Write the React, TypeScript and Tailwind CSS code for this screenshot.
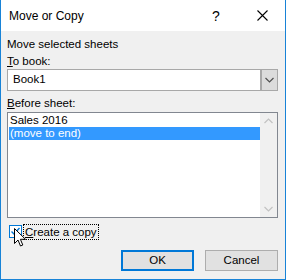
import React from "react";

function Chevron({ color, up }: { color: string; up?: boolean }) {
  return (
    <svg width="9" height="6" viewBox="0 0 9 6">
      <path d={up ? "M0.5 5 L4.5 1 L8.5 5" : "M0.5 1 L4.5 5 L8.5 1"} fill="none" stroke={color} strokeWidth="1.2" />
    </svg>
  );
}

export default function App() {
  return (
    <div
      className="w-[286px] h-[280px] bg-[#f0f0f0] border-l border-r border-b border-[#1883d7] flex flex-col text-[11.5px] text-black relative"
      style={{ fontFamily: '"Liberation Sans", Arial, sans-serif' }}
    >
      {/* Title bar */}
      <div className="h-[31px] bg-white flex items-center shrink-0">
        <div className="pl-[8px] text-[12px] text-[#000] pt-[1px]">Move or Copy</div>
        <div className="ml-auto w-[46px] h-full flex items-center justify-center text-[14px] pt-[1px]">?</div>
        <div className="w-[46px] h-full flex items-center justify-center">
          <svg width="11" height="11" viewBox="0 0 11 11">
            <path d="M0.5 0.5 L10.5 10.5 M10.5 0.5 L0.5 10.5" stroke="#000" strokeWidth="1.1" />
          </svg>
        </div>
      </div>

      {/* Body */}
      <div className="px-[6px] flex flex-col">
        <div className="mt-[7px] h-[13px] leading-[13px]">Move selected sheets</div>
        <div className="mt-[4px] h-[13px] leading-[13px]">
          <span className="underline">T</span>o book:
        </div>
        <div className="mt-[1px] h-[22px] w-[271px] bg-white border border-[#a8a8a8] flex items-stretch">
          <div className="flex-1 pl-[5px] flex items-center">Book1</div>
          <div className="w-[17px] bg-[#dcdcdc] border-l-2 border-[#a8a8a8] flex items-center justify-center">
            <Chevron color="#505050" />
          </div>
        </div>
        <div className="mt-[6px] h-[13px] leading-[13px]">
          <span className="underline">B</span>efore sheet:
        </div>
        <div className="mt-[2px] h-[106px] w-[271px] bg-white border border-[#828790] flex">
          <div className="flex-1 pt-[1px] pl-[1px]">
            <div className="h-[13px] leading-[13px] pl-[1px]">Sales 2016</div>
            <div className="h-[13px] leading-[13px] pl-[1px] bg-[#3399ff] text-white">(move to end)</div>
          </div>
          <div className="w-[17px] bg-[#f0f0f0] flex flex-col items-center justify-between py-[5px]">
            <Chevron color="#c2c2c2" up />
            <Chevron color="#c2c2c2" />
          </div>
        </div>
        <div className="mt-[5px] h-[17px] flex items-center">
          <div className="ml-[2px] w-[13px] h-[13px] border border-[#0078d7] bg-white flex items-center justify-center">
            <svg width="11" height="11" viewBox="0 0 11 11">
              <path d="M1.5 5.5 L4 8 L9.5 2" fill="none" stroke="#0078d7" strokeWidth="1.4" />
            </svg>
          </div>
          <div className="ml-[1px] px-[1px] h-[16px] leading-[14px] border border-dotted border-black">
            <span className="underline">C</span>reate a copy
          </div>
        </div>
        <div className="mt-[10px] flex justify-end pr-[1px] gap-[11px]">
          <div className="w-[73px] h-[21px] bg-[#e1e1e1] border-2 border-[#0078d7] flex items-center justify-center">OK</div>
          <div className="w-[73px] h-[21px] bg-[#e1e1e1] border border-[#adadad] flex items-center justify-center">Cancel</div>
        </div>
      </div>

      {/* Mouse cursor */}
      <svg className="absolute left-[13px] top-[228px]" width="13" height="20" viewBox="0 0 13 20">
        <path d="M0.5 0.5 L0.5 15.5 L4 12 L6.5 18 L8.8 17 L6.4 11.3 L11.5 11.3 Z" fill="#fff" stroke="#000" strokeWidth="1" />
      </svg>
    </div>
  );
}
